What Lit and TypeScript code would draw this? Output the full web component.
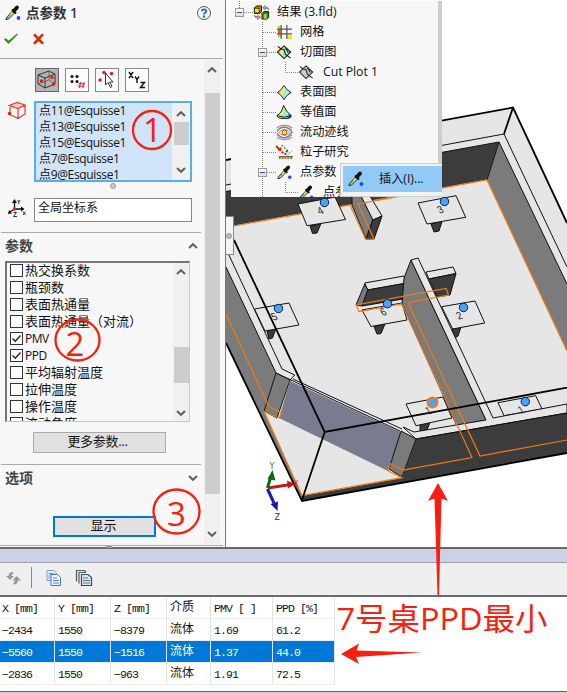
import { LitElement, html, svg, css } from "lit";
import { customElement } from "lit/decorators.js";

const dropper = svg`
  <path d="M2.5 13.500 L9 6.500 L11 8.500 L4.500 15 L2 15.500z" fill="#fff" stroke="#111" stroke-width="1"/>
  <path d="M3 14 L6.500 10.500" stroke="#3ac04a" stroke-width="1.500"/>
  <path d="M6.500 10.500 L9 8" stroke="#e8d820" stroke-width="1.500"/>
  <path d="M8 5.500 L12 9.500" stroke="#111" stroke-width="1.800"/>
  <path d="M10 6.800 L13 3.500" stroke="#111" stroke-width="3.800" stroke-linecap="round"/>
  <circle cx="14.500" cy="14" r="1.900" fill="#2347ff"/>`;

const rainbow = svg`<linearGradient id="rb" x1="0" x2="1" y1="0.300" y2="0.700">
  <stop offset="0" stop-color="#f55"/><stop offset=".3" stop-color="#ffe98a"/>
  <stop offset=".55" stop-color="#9df0a8"/><stop offset=".75" stop-color="#8ff"/><stop offset="1" stop-color="#22f"/></linearGradient>`;

const icons: Record<string, unknown> = {
  results: svg`<path d="M1.500 4 L4 2 h5 v6 l-2 2 h-5.500z" fill="#b98a00" stroke="#111"/><path d="M1.500 4.500h5v5h-5z" fill="#ffe21a" stroke="#111" stroke-width=".8"/>
    <path d="M9.500 10 l2-2 h5 v6 l-2 2 h-5z" fill="#108a30" stroke="#111"/><path d="M10 10.500h2v5h-2z" fill="#f33"/><path d="M12 10.500h1.500v5H12z" fill="#fe3"/><path d="M13.500 10.500h1.200v5h-1.200z" fill="#3e5"/>
    <path d="M10 4 l3-2.500 v1.500 q3 0 4 3 q-2-1.500-4-1.200 V6z M8 14 l-3 2.500 v-1.500 q-3 0-4-3 q2 1.500 4 1.200 V12z" fill="#aaa" stroke="#555" stroke-width=".6"/>`,
  mesh: svg`<path d="M2 2h3v4H2z" fill="#8e4"/><path d="M2 6h3v5H2z" fill="#f43"/><path d="M2 11h4v3H2z" fill="#8e4"/><path d="M12 12h5v4h-5z" fill="#fd1"/>
    <path d="M5.500 1v15M11.500 1v15M1 5.500h16M1 10.500h16" stroke="#555" stroke-width="1.300"/>`,
  cut: svg`<defs>${rainbow}</defs><path d="M1.500 8.500 L8.500 2 L15.500 8.500 L8.500 15.500z" fill="url(#rb)" stroke="#111" stroke-width="1.100"/>
    <path d="M2 2.500 L5 5 L8.500 6 L10 11 L15.500 15 M10 4l3 5" fill="none" stroke="#111" stroke-width="1.100"/>`,
  cutgrey: svg`<path d="M1.500 8.500 L8.500 2 L15.500 8.500 L8.500 15.500z" fill="#ccc" stroke="#222" stroke-width="1.100"/>
    <path d="M2 2.500 L5 5 L8.500 6 L10 11 L15.500 15 M10 4l3 5" fill="none" stroke="#222" stroke-width="1.100"/>`,
  surface: svg`<defs>${rainbow}</defs><path d="M1.500 9 Q6 6.500 8.500 1.500 Q11 6.500 16 9 Q11 11.500 8.500 16.500 Q6 11.500 1.500 9z" fill="url(#rb)" stroke="#222" stroke-width="1"/>`,
  iso: svg`<defs>${rainbow}</defs><path d="M1 12 Q6 10 8 1.500 Q11 9 16 12 Q17 15.500 9 15.500 Q1 15.500 1 12z" fill="url(#rb)" stroke="#111" stroke-width="1"/><path d="M2 12.500 Q9 15.500 15 12.500" stroke="#111" fill="none"/>`,
  flow: svg`<g fill="none" stroke-width="1.200"><path d="M1 4 Q9-1 17 4 M1 14 Q9 19 17 14" stroke="#e66"/><path d="M1 6.500 Q9 0 17 6.500 M1 11.500 Q9 18 17 11.500" stroke="#7b4"/><path d="M1 8 Q5 3 9 3.500 Q14 4 17 8.500 Q14 14 9 14.500 Q4 14 1 9.500" stroke="#47f"/><path d="M3 9 Q9 2 15 9 Q9 16 3 9z" stroke="#e93"/></g><circle cx="9" cy="9" r="2.600" fill="#fe1" stroke="#833"/>`,
  particle: svg`<path d="M0 2 L4 6" stroke="#e11" stroke-width="2"/><path d="M6 7.500 L1.500 6.800 L5.500 3z" fill="#e11"/><path d="M6 1 l7 7" stroke="#283" stroke-dasharray="2 1.500" stroke-width="1.300"/><path d="M13 9l-3.500-.5 3-3z" fill="#283"/>
    <circle cx="7" cy="9" r="1.200" fill="#e11"/><circle cx="10" cy="10.500" r="1.200" fill="#e11"/><path d="M3 13.500h15" stroke="#222"/><path d="M3 15h15" stroke="#b96f00" stroke-width="2" stroke-dasharray="2 1"/><path d="M12 12 l5-5" stroke="#555" stroke-dasharray="1 1"/>`,
  dropper,
};
const icon = (name: string, cls = "ic") => html`<svg class=${cls} viewBox="0 0 18 18">${icons[name]}</svg>`;
const chev = (up: boolean, cls = "chev") =>
  html`<svg class=${cls} viewBox="0 0 12 8"><path d=${up ? "M2 6 L6 2.200 L10 6" : "M2 2 L6 5.800 L10 2"} fill="none" stroke="#606060" stroke-width="2"/></svg>`;

interface Desk { p: string; leg: string; dot: [number, number]; n: string; on?: boolean }
const desks: Desk[] = [
  { p: "298,204 335,197 345.500,219.500 307,225.700", leg: "310,226 321,223.500 317,233 312.500,233.500", dot: [324.5, 202.5], n: "4" },
  { p: "418,203 456,195.700 465.700,217.300 427,224", leg: "431,224 442,221.500 439,231 434,232", dot: [444.5, 201.5], n: "3" },
  { p: "254.500,309 289,303 299,325 265,331", leg: "267,331 276,328.500 272.500,338 269,339", dot: [278.5, 308.5], n: "5" },
  { p: "362,310 402,303 407,320 371,326.500", leg: "374,326.500 385,324 381,333.500 377,334", dot: [387.5, 303.7], n: "6" },
  { p: "441.700,306.700 475,301 484.700,323 452.700,329", leg: "452,329 461,327 458,336 455,338", dot: [463.5, 307.5], n: "2" },
  { p: "406,404 443,397 452,418 416,425.700", leg: "420,425 430,422.500 427,430 420,431", dot: [432.5, 402.5], n: "1", on: true },
  { p: "498,402.700 535.700,395.700 542,409 504,415.700", leg: "", dot: [525.3, 401.7], n: "1" },
];

const scene = svg`
  <polygon class="light" points="226,160 513,107.500 567,223 567,453 302,501 226,344"/>
  <polygon class="dark" points="226,191.500 499,142 487,179.500 226,227"/>
  <polygon class="mid" points="499,142 567,284 567,351 487,180"/>
  <polygon class="mid" points="226,267 276,373 264,411 302,496 302,501 226,344"/>
  <path class="ln" d="M226 185 L504 134 L567 267 M226 191.500 L499 142 L567 284 M499 142 L487 180"/>
  <path class="or" d="M234 226 L487 180 L567 351"/>
  <path class="ln" d="M228 253 L282 369 L294.700 375 L290 380 M226 267 L276 373 L400 431 M293 379 L402 429"/>
  <polygon class="mid ln2" points="276,373 290,380 277,418 264,411"/>
  <polygon fill="#797b8e" points="290,381 401,432 388,471 279,418"/>
  <polygon class="dark" points="416,439 567,413 567,453 302,501 302,496 402,478"/>
  <polygon class="mid ln2" points="352,196 361,196 373,219 366,239 352,205"/>
  <polygon class="light ln2" points="361,196 370,196 382,216 373,220"/>
  <polygon class="dark ln2" points="373,220 382,216 374,239 366,239"/>
  ${desks.map(d => svg`<polygon class="dark ln2" points=${d.leg}/><polygon class="light ln2" points=${d.p}/>`)}
  <polygon class="light ln2" points="364.700,283 404,276 407,283 367.700,290"/>
  <polygon class="dark ln2" points="367.700,290 407,283 403,299 362,306"/>
  <polygon class="mid ln2" points="364.700,284 367.700,290 362,306 356,305"/>
  <polygon class="light ln2" points="426,272 453,267 456,273.500 429,279"/>
  <polygon class="dark ln2" points="429,279 456,273.500 450,295 437,297"/>
  <polygon class="mid ln2" points="411,260 486,420 457,426 402,304 404,278"/>
  <polygon class="light ln2" points="411,260 418,258 493,418 567,404 567,413 416,439 403,427 414,432 486,420"/>
  <path class="ln" d="M416 439 L567 413"/>
  <path d="M487 419.500 L492 418.500" stroke="#e6e6e6" stroke-width="3"/>
  <polygon class="mid ln2" points="401,431 416,439 402,477 389,469"/>
  <path class="or" d="M226 314 L269 406.700 L282 412.700 L279 418 L264 411.500 L302 495.700 L402 477.700 L388 471 L390 463.500 L403 470 L472 457.500 L401.700 304 L359 311.500 L356 305 L446 288.500 L448.500 295 L408 302.700 L480 456 L567 440"/>
  <path class="or" d="M350 205 L365.500 239 L374 239 L358 204 L402 196"/>
  <path class="bk" d="M226 160 L513 107.500 L567 223 M513 107.500 L504 134 M234 240 L324.700 432 L567 387.700 M324.700 432 L302 500 M226 343 L302 501 L567 453"/>
  ${desks.map(d => svg`
    <text class="num" transform=${`translate(${d.dot[0] - 5} ${d.dot[1] + 12}) skewX(20) rotate(-10)`}>${d.n}</text>
    <circle cx=${d.dot[0]} cy=${d.dot[1]} r=${d.on ? 5 : 4.2} fill="#4ba1ff" stroke=${d.on ? "#f07c12" : "#123"} stroke-width=${d.on ? 2 : 1}/>`)}
  <path d="M268 488 L289 484.800" stroke="#c31818" stroke-width="3"/><path d="M287 480.500 L295 484 L288 488.500z" fill="#c31818"/>
  <path d="M267.500 488 L271 476" stroke="#0b6a16" stroke-width="3"/><path d="M267.500 479 L272.500 470 L275.500 480.500z" fill="#0b6a16"/>
  <path d="M267.500 489 L274 503" stroke="#1818c0" stroke-width="3"/><path d="M270.500 504 L278 501.500 L277.500 511z" fill="#1818c0"/>
  <text class="ax" x="269.500" y="469" fill="#138a13">Y</text><text class="ax" x="293" y="487" fill="#f02020">X</text><text class="ax" x="274.500" y="519.500" fill="#1818ee">Z</text>`;

@customElement("app-root")
export class AppRoot extends LitElement {
  static styles = css`
    :host { display: block; position: relative; width: 567px; height: 693px; overflow: hidden; background: #fff;
      font: 13px/16px "Open Sans", "Noto Sans CJK SC", sans-serif; color: #111; }
    * { box-sizing: border-box; }
    svg { display: block; flex: none; }
    .top { display: flex; height: 547px; }
    .panel { width: 226px; background: #f7f7f7; border-right: 1px solid #777; display: flex; flex-direction: column; }
    .head { height: 59px; width: 223px; border-bottom: 1px solid #a5a5a5; padding: 3px 0 0 4px; }
    .title { display: flex; align-items: center; height: 19px; font-weight: 600; color: #333; font-size: 13.5px; }
    .title .ic { margin-right: 4px; }
    .title span { flex: 1; }
    .help { width: 16px; height: 16px; margin-right: 11px; }
    .acts { display: flex; gap: 14px; margin-top: 9px; }
    .acts svg { width: 15px; height: 16px; }
    .ic { width: 18px; height: 18px; }
    .mid-col { display: flex; width: 220px; height: 486px; }
    .body { width: 205px; }
    .sb { background: #f0f0f0; display: flex; flex-direction: column; align-items: center; flex: none; }
    .sb .thumb { background: #cdcdcd; width: 100%; }
    .sb .sp { flex: 1; }
    .chev { width: 12px; height: 8px; }
    .main-sb { width: 16px; margin-top: 1px; height: 484px; padding: 6px 0; }
    .main-sb .thumb { height: 401px; margin-top: 19px; width: 15px; }
    .modes { display: flex; gap: 6px; padding: 9px 0 0 35px; }
    .mode { width: 24px; height: 24px; border: 1px solid #888; background: #fbfbfb; }
    .mode.on { background: #b4b4b4; border-color: #666; }
    .mode svg { width: 22px; height: 22px; }
    .pick { display: flex; margin-top: 9px; padding-left: 7px; }
    .pick .side { width: 27px; }
    .points { width: 158px; height: 81px; border: 2px solid #56afe6; background: #cfe4f8; display: flex; justify-content: space-between; overflow: hidden; }
    .points .rows { padding-left: 3px; font-size: 12px; letter-spacing: -0.35px; white-space: nowrap; }
    .points .rows div { height: 16px; line-height: 16px; }
    .points .sb { width: 18px; padding: 7px 1px 6px; }
    .points .thumb { height: 23px; margin-top: 4px; width: 15px; }
    .grip { width: 6px; height: 6px; border-radius: 3px; background: #ccc; border: 1px solid #999; margin: 1px 0 0 110px; }
    .cs { display: flex; padding-left: 7px; margin-top: 9px; }
    .cs .side { width: 27px; }
    .cs .box { width: 158px; height: 24px; border: 1px solid #888; background: #fff; padding-left: 3px; line-height: 17px; font-size: 12px; }
    .sec { display: flex; justify-content: space-between; align-items: center; width: 200px; margin-left: 1px; border-top: 1px solid #aaa; height: 29px; padding: 0 2px 2px 4px; font-weight: 700; font-size: 14px; color: #444; }
    .sec.a { margin-top: 10px; }
    .params { width: 185px; height: 161px; margin-left: 5px; border: 1px solid #c8c8c8; border-top: 2px solid #777; border-left: 2px solid #777; display: flex; justify-content: space-between; overflow: hidden; }
    .params .rows { padding-left: 3px; white-space: nowrap; margin-top: -1px; }
    .row { display: flex; align-items: center; height: 17px; gap: 2px; font-size: 13px; line-height: 15px; }
    .row.lat { font-size: 12px; letter-spacing: -0.5px; }
    .cb { width: 13px; height: 13px; border: 1px solid #333; background: #fff; flex: none; }
    .cb svg { width: 11px; height: 11px; }
    .params .sb { width: 16px; padding: 5px 0 4px; }
    .params .thumb { height: 36px; margin-top: 71px; width: 15px; }
    .btn { background: #e1e1e1; border: 1px solid #aaa; display: flex; align-items: center; justify-content: center; line-height: 15px; padding-bottom: 2px; }
    .more { width: 133px; height: 21px; margin: 10px 0 11px 33px; letter-spacing: -0.3px; padding-right: 4px; }
    .show { width: 103px; height: 21px; border: 2px solid #0078d7; margin: 23px 0 0 53px; padding-right: 2px; }
    .foot { width: 223px; border-top: 1px solid #aaa; height: 2px; }
    .foot i { display: block; width: 6px; height: 2px; background: #999; margin-left: 106px; }
    .view { width: 341px; height: 547px; }
    .light { fill: #e6e6e6; } .dark { fill: #3c3c3c; } .mid { fill: #7b7b7b; }
    .ln { fill: none; stroke: #111; stroke-width: 1; }
    .ln2 { stroke: #111; stroke-width: 1; }
    .or { fill: none; stroke: #f07c12; stroke-width: 1.200; }
    .bk { fill: none; stroke: #000; stroke-width: 1.800; }
    .num { font: 10px "Liberation Sans", sans-serif; fill: #222; }
    .ax { font: 8px "DejaVu Sans", sans-serif; }
    .handle { position: absolute; left: 226px; top: 216px; width: 8px; height: 39px; background: #f4f4f4; border: 1px solid #888; border-left: 0; display: flex; align-items: center; }
    .handle i { width: 6px; height: 6px; border-radius: 50%; background: #bbb; border: 1px solid #999; }
    .tree { position: absolute; left: 231px; top: 1px; width: 211px; height: 196px; background: #f7f7f7; border-right: 4px solid #cdcdcd; overflow: hidden; }
    .tr { height: 20px; display: flex; align-items: center; font-size: 12.2px; position: relative; top: 1px; white-space: nowrap; }
    .l0 { padding-left: 4px; } .l1 { padding-left: 27px; } .l2 { padding-left: 54px; }
    .l1 .dots { width: 18px; } .l1 .ex + .dots { width: 9px; }
    .l1 .dots.w { margin-left: 5px; width: 13px; }
    .ex { width: 9px; height: 9px; border: 1px solid #999; background: linear-gradient(#fff, #ddd); display: flex; align-items: center; justify-content: center; flex: none; }
    .ex i { width: 5px; height: 1px; background: #2346a8; }
    .dots { width: 9px; border-top: 1px dotted #888; flex: none; }
    .tr .ic { width: 17px; height: 17px; margin-right: 7px; }
    .l0 .ic { margin-right: 7px; }
    .l2 .dots { width: 13px; } .l2 .ic { margin-right: 8px; }
    .stem { position: absolute; width: 0; border-left: 1px dotted #777; }
    .s1 { left: 31px; top: 21px; height: 175px; } .s2 { left: 54px; top: 61px; height: 11px; } .s3 { left: 54px; top: 181px; height: 11px; } .s0 { left: 8px; top: 0; height: 7px; }
    .menu { position: absolute; left: 340px; top: 163px; width: 102px; height: 34px; background: #f2f2f2; border: 1px solid #ccc; border-right: 0; padding: 2px 0 0 2px; }
    .mi { background: #91c9f7; height: 26px; display: flex; align-items: center; padding-left: 4px; font-size: 12.2px; gap: 14px; }
    .dock { height: 146px; border-top: 2px solid #686868; }
    .bar { height: 14px; background: #cdd1e6; border-bottom: 1px solid #9a9fb0; }
    .tools { height: 34px; background: #efefef; border-bottom: 2px solid #6c6c6c; display: flex; align-items: center; padding: 0 0 3px 5px; }
    .tools svg { width: 18px; height: 18px; }
    .tools .sep { width: 1px; height: 21px; background: #888; margin: 0 13px 0 8px; }
    .tools svg + svg { margin-left: 12px; }
    .grid { width: 335px; font: 11.5px/23px "Liberation Mono", "Noto Sans CJK SC", monospace; letter-spacing: -0.9px; }
    .gr { display: grid; grid-template-columns: 55px 56px 56px 44px 62px 62px; height: 22px; }
    .gr div { border-right: 1px solid #e4e4e4; border-bottom: 1px solid #eee; padding-left: 3px; white-space: pre; height: 22px; }
    .gr div:first-child { padding-left: 2px; }
    .gr div:nth-child(4) { font-size: 12px; letter-spacing: 0; }
    .gr.sel div { background: #0078d7; color: #fff; }
    .end { position: absolute; left: 0; right: 0; top: 691px; height: 2px; background: #cdd1e6; border-top: 1px solid #5a5f90; }
    .notes { position: absolute; left: 0; top: 0; width: 567px; height: 693px; }
    .notes ellipse { fill: none; stroke: #fa1e0e; stroke-width: 2.300; }
    .notes text { fill: #fa1e0e; font-family: "Open Sans", "Noto Sans CJK SC", sans-serif; }
    .notes path { fill: #fa1e0e; }
  `;

  private params = [
    ["热交换系数"], ["瓶颈数"], ["表面热通量"], ["表面热通量（对流）"], ["PMV", 1], ["PPD", 1],
    ["平均辐射温度"], ["拉伸温度"], ["操作温度"], ["流动角度 xx"],
  ] as [string, number?][];
  private nodes: [string, string, boolean?][] = [
    ["mesh", "网格"], ["cut", "切面图", true], ["cutgrey", "Cut Plot 1"], ["surface", "表面图"], ["iso", "等值面"],
    ["flow", "流动迹线"], ["particle", "粒子研究"], ["dropper", "点参数", true], ["dropper", "点参数 1"],
  ];
  private rows = [
    ["X [mm]", "Y [mm]", "Z [mm]", "介质", "PMV [ ]", "PPD [%]"],
    ["−2434", "1550", "−8379", "流体", "1.69", "61.2"],
    ["−5560", "1550", "−1516", "流体", "1.37", "44.0"],
    ["−2836", "1550", "−963", "流体", "1.91", "72.5"],
  ];

  render() {
    return html`
      <div class="top">
        <div class="panel">
          <div class="head">
            <div class="title">${icon("dropper")}<span>点参数 1</span>
              <svg class="help" viewBox="0 0 16 16"><circle cx="8" cy="8" r="6.500" fill="#eef4f8" stroke="#555"/><path d="M5.800 6.300 Q5.800 4.300 8 4.300 Q10.200 4.300 10.200 6.200 Q10.200 7.300 8.900 8 Q8 8.500 8 9.500" fill="none" stroke="#15709f" stroke-width="1.800"/><rect x="7" y="10.500" width="2" height="2" fill="#15709f"/></svg>
            </div>
            <div class="acts">
              <svg viewBox="0 0 15 16"><path d="M0 8.500 L4.500 13 L14 3.500 L13 2.500 L4.700 9.500 L1.500 7z" fill="#2f9e10"/></svg>
              <svg viewBox="0 0 15 16"><path d="M0 4 L2 2.500 L5.500 6 L9 2.500 L11 4 L7.300 8 L11 12 L9 13.500 L5.500 10 L2 13.500 L0 12 L3.700 8z" fill="#de2708"/></svg>
            </div>
          </div>
          <div class="mid-col">
            <div class="body">
              <div class="modes">
                <div class="mode on"><svg viewBox="0 0 22 22"><path d="M2 6 L13 2 L19 5 V15 L9 19 L2 15z M2 6 L9 9 L19 5 M9 9 V19" fill="none" stroke="#333"/><path d="M13 2 V11 L2 15 M13 11 L19 15" fill="none" stroke="#555" stroke-width=".7"/><g fill="#f11"><circle cx="5.500" cy="12" r="1.700"/><circle cx="16" cy="8.500" r="1.700"/><circle cx="17.500" cy="15" r="1.700"/></g></svg></div>
                <div class="mode"><svg viewBox="0 0 22 22"><g fill="#111"><circle cx="6" cy="7.500" r="1.500"/><circle cx="11" cy="7.500" r="1.500"/><circle cx="6" cy="12.500" r="1.500"/><circle cx="11" cy="12.500" r="1.500"/></g><path d="M14.500 13 l-1 6 M18 13 l-1 6 M12.500 14.800h6.500 M12 17.200h6.500" stroke="#e22" fill="none"/></svg></div>
                <div class="mode"><svg viewBox="0 0 22 22"><g fill="#f11"><circle cx="8" cy="3.500" r="1.700"/><circle cx="15.500" cy="4.500" r="1.700"/><circle cx="4" cy="11" r="1.700"/></g><path d="M9.500 4 V16 L12 13.500 L14.500 18.500 L16 17.500 L13.700 13 H17z" fill="#fff" stroke="#333"/></svg></div>
                <div class="mode"><svg viewBox="0 0 22 22"><path d="M3 3 L7 9 M7 3 L3 9 M9 7.500 L11 10.500 L13 7.500 M11 10.500 V14 M14.500 13.500 H18.500 L14.500 18.500 H19" fill="none" stroke="#111" stroke-width="1.400"/></svg></div>
              </div>
              <div class="pick">
                <div class="side"><svg width="19" height="19" viewBox="0 0 19 19"><path d="M2 4.500 L10 1.500 L18 4 L11 7.500z" fill="#ffc9c4"/><path d="M2 4.500 L10 1.500 L18 4 L11 7.500z M11 7.500 V17.500 M18 4 V13 L11 17.500 L3 13.500 V4.500" fill="none" stroke="#e43a32" stroke-width="1.200"/><circle cx="2.500" cy="12.500" r="1.700" fill="#f11"/></svg></div>
                <div class="points">
                  <div class="rows">${["11", "13", "15", "7", "9"].map(n => html`<div>点${n}@Esquisse1</div>`)}</div>
                  <div class="sb">${chev(true)}<div class="thumb"></div><div class="sp"></div>${chev(false)}</div>
                </div>
              </div>
              <div class="grip"></div>
              <div class="cs">
                <div class="side"><svg width="20" height="20" viewBox="0 0 20 20"><path d="M7.500 11 V2 M7.500 11 H15.500 M7.500 11 L3 14" stroke="#111" stroke-width="1.300"/><path d="M5 5 L7.500 1 L10 5z M14 8.500 L17.500 11 L14 13.500z M1 16 L2 12 L5 15.500z" fill="#111"/><path d="M10.500 2l1.300 2 1.300-2M11.800 4v2M16 13.500l2.500 3.500M18.500 13.500l-2.500 3.500M6.500 14.500h3l-3 4h3.500" stroke="#333" fill="none"/><circle cx="7.500" cy="11" r="1.700" fill="#f11"/></svg></div>
                <div class="box">全局坐标系</div>
              </div>
              <div class="sec a">参数${chev(true)}</div>
              <div class="params">
                <div class="rows">${this.params.map(([t, on]) => html`<div class="row ${on ? "lat" : ""}"><div class="cb">${on ? html`<svg viewBox="0 0 11 11"><path d="M1.500 5.500 L4.300 8.300 L9.500 2.500" fill="none" stroke="#222" stroke-width="1.300"/></svg>` : ""}</div>${t}</div>`)}</div>
                <div class="sb">${chev(true)}<div class="thumb"></div><div class="sp"></div>${chev(false)}</div>
              </div>
              <div class="btn more">更多参数...</div>
              <div class="sec">选项${chev(false)}</div>
              <div class="btn show">显示</div>
            </div>
            <div class="sb main-sb">${chev(true)}<div class="thumb"></div><div class="sp"></div>${chev(false)}</div>
          </div>
          <div class="foot"><i></i></div>
        </div>
        <svg class="view" viewBox="226 0 341 547">${scene}</svg>
      </div>
      <div class="dock">
        <div class="bar"></div>
        <div class="tools">
          <svg viewBox="0 0 18 18"><path d="M5 11 L1 7 H3.500 Q3.500 3 8 3 V5 Q6.500 5 6.500 7 H9z M11.500 7 L16 11.500 H13 Q13 15.500 8.500 15.500 V13.500 Q10 13.500 10 11.500 H7.500z" fill="#999"/></svg>
          <i class="sep"></i>
          <svg viewBox="0 0 18 18"><path d="M2 1.500h7l2 2v8H2z" fill="#e8efff" stroke="#7e97d8"/><path d="M6 5.500h6.500l3 3v8H6z" fill="#eaf3ff" stroke="#4878c0"/><path d="M8 9h4M8 11.500h6M8 14h6M3.500 4.500h5M3.500 7h2M3.500 9h2" stroke="#5c88d8"/></svg>
          <svg viewBox="0 0 18 18"><path d="M1.500 12.500v-11h8l1.500 1.500M4 14.500v-11h7" fill="none" stroke="#4a5a5f" stroke-width="1.200"/><path d="M6.500 5.500h6.500l3.500 3v8h-10z" fill="#dbe6ee" stroke="#36505e" stroke-width="1.200"/><path d="M8 9h5M8 11.500h7M8 14h7" stroke="#5d7c90"/></svg>
        </div>
        <div class="grid">${this.rows.map((r, i) => html`<div class="gr ${i === 2 ? "sel" : ""}">${r.map(c => html`<div>${c}</div>`)}</div>`)}</div>
      </div>
      <div class="handle"><i></i></div>
      <div class="tree">
        <i class="stem s0"></i><i class="stem s1"></i><i class="stem s2"></i><i class="stem s3"></i>
        <div class="tr l0"><div class="ex"><i></i></div><div class="dots"></div>${icon("results")}结果 (3.fld)</div>
        ${this.nodes.map(([ic, t, ex], i) => {
          const deep = i === 2 || i === 8;
          return html`<div class="tr ${deep ? "l2" : "l1"}">${ex ? html`<div class="ex"><i></i></div>` : ""}<div class="dots ${!ex && !deep ? "w" : ""}"></div>${icon(ic)}${t}</div>`;
        })}
      </div>
      <div class="menu"><div class="mi">${icon("dropper")}插入(I)...</div></div>
      <div class="end"></div>
      <svg class="notes" viewBox="0 0 567 693">
        <ellipse cx="152" cy="130" rx="19" ry="19"/><ellipse cx="77.500" cy="340" rx="22" ry="20.500"/><ellipse cx="176.500" cy="511.500" rx="23" ry="22"/>
        <text x="143" y="142" font-size="33">1</text><text x="65.500" y="356" font-size="33">2</text><text x="167" y="525.500" font-size="33">3</text>
        <text x="336.500" y="630" font-size="31" textLength="211" lengthAdjust="spacingAndGlyphs">7号桌PPD最小</text>
        <path d="M438 483 L448 501 L441.500 498.500 L439 595 L437.500 595 L434.500 498.500 L428 501z"/>
        <path d="M341 654 L359 643.500 L356.500 650.500 L422 652.500 L356 657 L359 664z"/>
      </svg>`;
  }
}
